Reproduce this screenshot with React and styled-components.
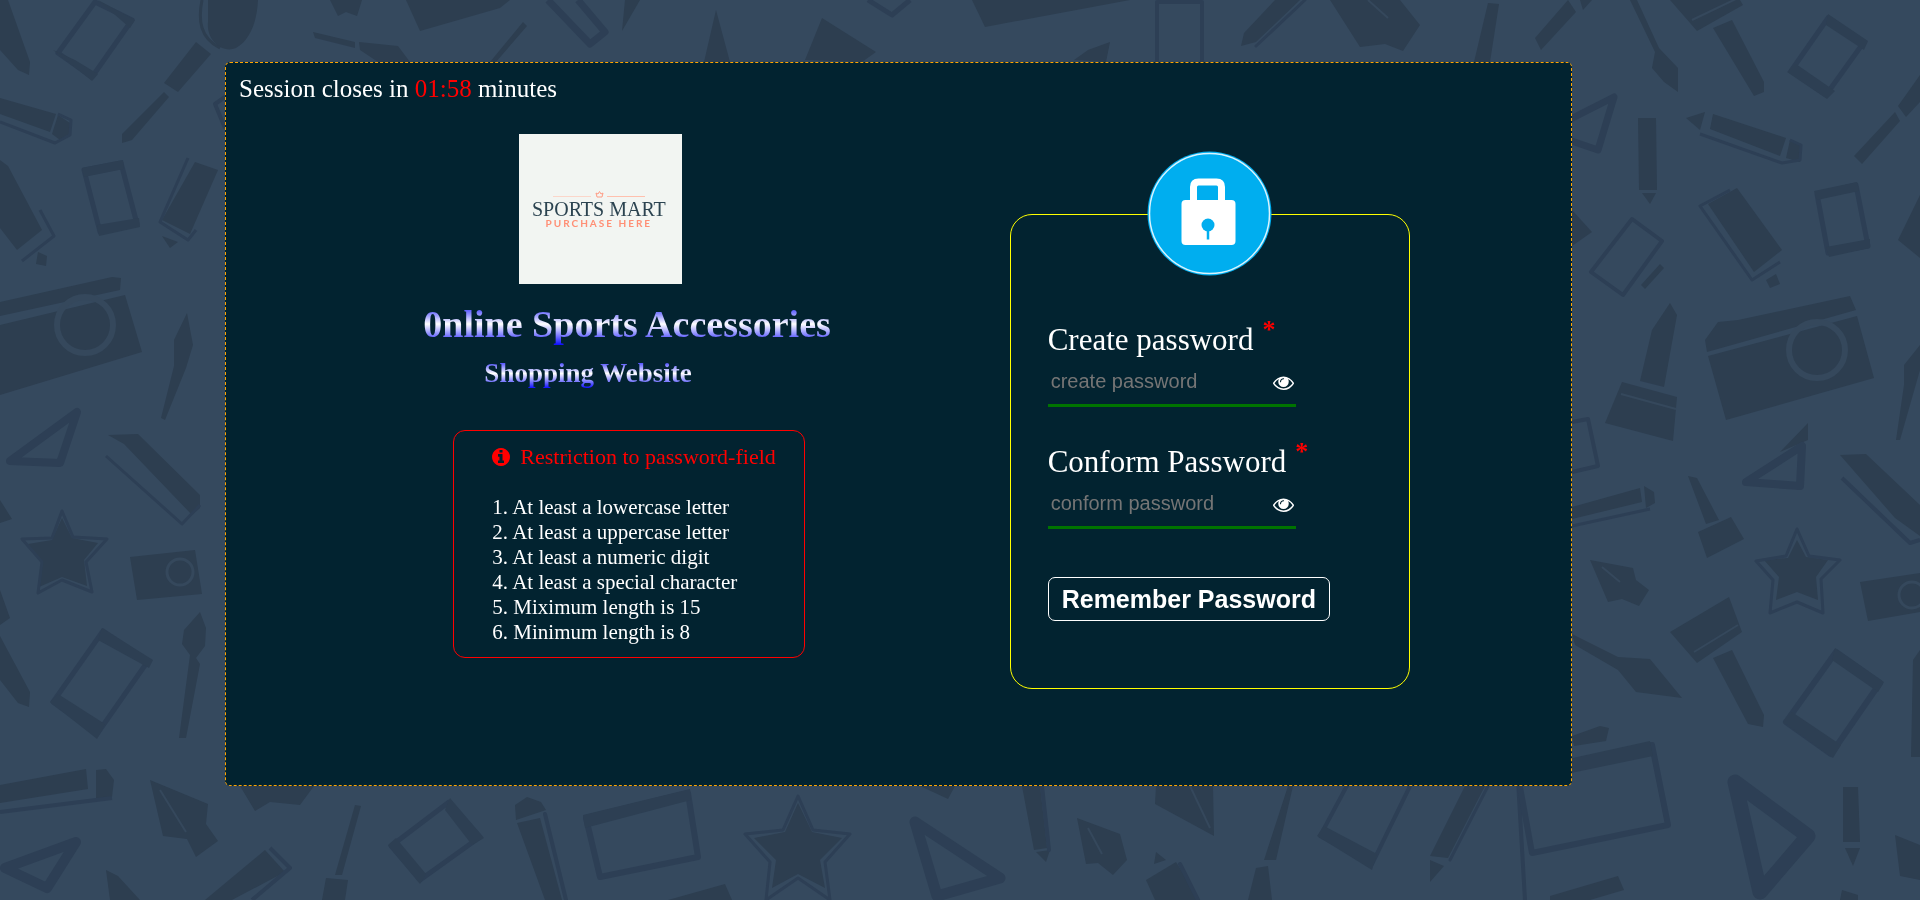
import React, { useState } from 'react';
import styled, { createGlobalStyle } from 'styled-components';

const GlobalStyle = createGlobalStyle`
  * { box-sizing: border-box; }
  body {
    margin: 0;
    background: #35495e;
    color: #fff;
    font-family: "Liberation Serif", "Times New Roman", serif;
  }
`;

const Page = styled.div`
  min-height: 100vh;
  padding: 62px 348px 62px 225px;
`;

const Backdrop = styled.svg`
  position: fixed;
  inset: 0;
  width: 100%;
  height: 100%;
  z-index: -1;
`;

const Panel = styled.main`
  min-height: 724px;
  padding-bottom: 96px;
  background: #022330;
  border: 1px dashed orange;
  border-radius: 5px;
`;

const Session = styled.p`
  margin: 0;
  padding: 11px 13px;
  font-size: 25px;
  line-height: 29px;
`;

const Clock = styled.span`
  color: red;
`;

const Columns = styled.div`
  display: grid;
  grid-template-columns: 197fr 406px 180fr 400px 161fr;
`;

const Brand = styled.section`
  grid-column: 2;
  padding-top: 20px;
`;

const Logo = styled.div`
  display: flex;
  flex-direction: column;
  align-items: center;
  width: 163px;
  height: 150px;
  margin-left: 96px;
  padding: 56px 4px 0 0;
  background: #f2f5f2;
  white-space: nowrap;
`;

const LogoName = styled.span`
  color: #2b4350;
  font-size: 20px;
  line-height: 22px;
`;

const LogoTagline = styled.span`
  color: #ff8f75;
  font: 700 10px/6px Lato, sans-serif;
  letter-spacing: 2px;
`;

const Title = styled.h1`
  width: max-content;
  margin: ${(p) => (p.$sub ? '12px 0 0 61px' : '18px 0 0')};
  font-size: ${(p) => (p.$sub ? 27 : 38)}px;
  line-height: ${(p) => (p.$sub ? 31 : 44)}px;
  font-weight: 700;
  color: transparent;
  background: linear-gradient(blue, white, blue);
  background-clip: text;
  -webkit-background-clip: text;
`;

const Rules = styled.section`
  width: 352px;
  height: 228px;
  margin: 41px 0 0 30px;
  padding: 13px 20px 13px 38px;
  border: 1px solid red;
  border-radius: 12px;
`;

const RulesTitle = styled.h2`
  display: flex;
  align-items: center;
  gap: 10px;
  margin: 0 0 25px;
  color: red;
  font-size: 22px;
  font-weight: 400;
  line-height: 26px;
  white-space: nowrap;
`;

const RulesList = styled.ol`
  margin: 0;
  padding: 0;
  list-style: none;
  font-size: 21px;
  line-height: 25px;
`;

const Card = styled.form`
  grid-column: 4;
  position: relative;
  height: 475px;
  margin-top: 100px;
  padding: 106px 37px 0;
  border: 1px solid #ffff00;
  border-radius: 22px;
`;

const Lock = styled.svg`
  position: absolute;
  top: -64px;
  left: 50%;
  margin-left: -63px;
  width: 125px;
  height: 125px;
`;

const Field = styled.div`
  height: 122px;
`;

const Label = styled.label`
  display: flex;
  gap: 9px;
  font-size: 31px;
  line-height: 37px;
  white-space: nowrap;
`;

const Required = styled.span`
  color: red;
  font-size: 26px;
  font-weight: 700;
  line-height: 18px;
`;

const InputRow = styled.div`
  display: flex;
  align-items: center;
  width: 248px;
  height: 49px;
  border-bottom: 3px solid #007400;
`;

const Input = styled.input`
  flex: 1;
  min-width: 0;
  height: 46px;
  padding: 0 3px;
  border: 0;
  outline: 0;
  background: transparent;
  color: #fff;
  font: 20px "Liberation Sans", Arial, sans-serif;
  &::placeholder { color: #757575; }
`;

const EyeButton = styled.button`
  display: flex;
  padding: 2px 2px 0;
  border: 0;
  background: none;
  color: #fff;
  cursor: pointer;
`;

const Submit = styled.button`
  height: 44px;
  margin-top: 12px;
  padding: 0 13px;
  border: 1px solid #fff;
  border-radius: 7px;
  background: transparent;
  color: #fff;
  font: 700 25px/28px "Liberation Sans", Arial, sans-serif;
  white-space: nowrap;
  cursor: pointer;
`;

const EYE =
  'M1664 960q-152-236-381-353 61 104 61 225 0 185-131.5 316.5t-316.5 131.5-316.5-131.5-131.5-316.5q0-121 61-225-229 117-381 353 133 205 333.5 326.5t434.5 121.5 434.5-121.5 333.5-326.5zm-720-384q0-20-14-34t-34-14q-125 0-214.5 89.5t-89.5 214.5q0 20 14 34t34 14 34-14 14-34q0-86 61-147t147-61q20 0 34-14t14-34zm848 384q0 34-20 69-140 230-376.5 368.5t-499.5 138.5-499.5-139-376.5-368q-20-35-20-69t20-69q140-229 376.5-368t499.5-139 499.5 139 376.5 368q20 35 20 69z';
const INFO =
  'M1152 1376v-160q0-14-9-23t-23-9h-96v-512q0-14-9-23t-23-9h-320q-14 0-23 9t-9 23v160q0 14 9 23t23 9h96v320h-96q-14 0-23 9t-9 23v160q0 14 9 23t23 9h448q14 0 23-9t9-23zm-128-896v-160q0-14-9-23t-23-9h-192q-14 0-23 9t-9 23v160q0 14 9 23t23 9h192q14 0 23-9t9-23zm640 416q0 209-103 385.5t-279.5 279.5-385.5 103-385.5-103-279.5-279.5-103-385.5 103-385.5 279.5-279.5 385.5-103 385.5 103 279.5 279.5 103 385.5z';

// Filled tools of the wallpaper: pens, brushes, nibs, sticks and camera bodies.
const SOLIDS = [
  '0,0 8,0 30,62 29,75 18,70 0,50',
  '196,42 211,54 178,92 164,83', '164,92 169,97 132,140 122,143 122,134',
  '0,98 56,114 50,132 0,114', '58,115 70,123 69,134 60,140 52,134', '0,160 8,166 42,230 17,250 0,228', '38,252 47,256 46,266 36,264',
  '195,162 218,170 190,234 162,220', '162,236 178,242 170,248',
  '0,302 112,277 121,278 120,290 0,316', '0,325 125,295 142,352 0,395',
  '187,313 193,345 186,368 165,420 161,418 174,366 174,340',
  '108,435 138,434 200,495 200,508 192,515 124,444',
  '62,518 72,538 98,543 84,560 87,586 62,577 39,587 43,562 28,544 52,540',
  '130,557 195,550 202,594 137,600',
  '200,612 206,628 205,646 196,658 200,664 186,738 179,738 190,655 182,644 184,630',
  '0,636 30,692 29,707 18,703 0,680', '0,500 12,519 0,523', '0,590 10,618 0,625',
  '0,785 86,769 88,789 0,803', '96,770 106,769 114,780 112,797 96,800',
  '150,780 208,804 206,824 218,841 196,857 187,839 163,836',
  '106,870 118,876 140,900 110,900', '240,786 314,786 300,805 270,802 255,811',
  '265,850 285,872 232,900 205,900', '355,805 361,806 342,875 335,875', '326,878 348,880 345,900 322,900',
  '515,805 527,797 541,802 546,810 516,820', '517,823 540,818 562,900 545,900',
  '330,0 362,0 357,16 346,12 338,16', '406,0 510,0 500,8 420,31', '625,0 640,0 622,31',
  '523,22 527,26 496,62 490,62', '313,32 355,42 355,48 315,38', '359,42 398,46 410,62 378,62 360,50',
  '716,10 730,62 704,62', '822,18 876,52 862,62 805,60', '972,0 1130,0 985,27',
  '1275,0 1300,0 1256,42 1241,46 1244,33', '1330,0 1400,0 1420,25 1403,51 1385,44 1360,47',
  '1488,3 1499,4 1490,62 1474,62', '1110,42 1106,62 1074,60 1088,50',
  '798,803 812,832 842,838 820,860 825,888 798,874 772,888 776,860 754,838 785,832',
  '1022,786 1040,786 1047,848 1034,850', '1036,852 1050,850 1046,862',
  '1077,818 1120,834 1127,860 1113,875 1098,863 1086,864',
  '1156,786 1213,786 1214,836 1155,804', '1146,880 1176,862 1200,900 1155,900', '1156,852 1166,860 1154,864',
  '1288,786 1293,786 1276,860 1264,860', '1256,868 1268,866 1272,900 1248,900',
  '1465,786 1485,786 1448,858 1430,856', '1430,860 1444,866 1430,882',
  '920,786 955,786 948,799', '668,900 725,884 732,900', '1568,0 1576,12 1541,50 1535,38',
  '1580,0 1592,0 1583,10', '1630,0 1637,0 1659,48 1678,68 1678,92 1664,82 1652,68 1655,52',
  '1670,0 1740,0 1743,5 1697,31', '1713,28 1732,20 1764,82 1764,92 1754,96',
  '1898,106 1920,75 1920,102 1906,117', '1895,112 1900,121 1862,164 1854,156',
  '1638,118 1656,118 1657,190 1639,190', '1642,193 1656,193 1650,204',
  '1686,118 1705,112 1700,130', '1713,114 1786,138 1780,156 1710,129', '1790,140 1802,146 1800,162 1786,158',
  '1708,204 1737,188 1782,250 1754,272', '1766,280 1776,274 1780,284 1770,288',
  '1898,240 1920,195 1920,258', '1572,210 1592,232 1572,246', '1660,264 1664,268 1645,289 1641,285',
  '1670,303 1677,315 1664,387 1640,381 1652,330', '1622,382 1677,397 1673,441 1605,423',
  '1705,340 1718,322 1738,320 1850,296 1856,310 1707,352', '1708,356 1857,316 1874,378 1726,420',
  '1920,345 1904,365 1904,385 1896,440 1900,440 1920,370', '1808,423 1808,440 1780,452',
  '1572,507 1640,488 1642,502 1572,519', '1644,486 1654,492 1655,503 1646,508',
  '1688,476 1697,478 1719,520 1706,524', '1698,532 1731,517 1744,539 1707,558',
  '1840,455 1866,454 1920,505 1920,536 1895,518', '1590,560 1633,568 1636,580 1649,590 1639,606 1622,599 1608,602',
  '1797,540 1806,557 1828,560 1816,577 1818,600 1797,592 1776,600 1779,577 1764,560 1788,558',
  '1860,582 1920,573 1920,612 1868,621',
  '1670,632 1729,597 1742,632 1697,663', '1713,658 1732,650 1764,715 1763,727 1748,724',
  '1572,634 1618,657 1650,659 1682,698 1636,692 1618,670 1575,645',
  '1572,736 1600,726 1609,728 1606,741 1574,746', '1843,787 1858,787 1860,842 1843,842',
  '1845,848 1860,848 1853,866', '1895,835 1920,845 1920,880 1900,876',
  '1550,896 1618,876 1624,890 1590,900 1550,900', '1842,890 1858,895 1858,900 1840,900',
  '1913,660 1920,650 1920,757 1911,757',
];

// Outlined tools: phones, tablets, clipboards and set squares, as [stroke width, points].
const OUTLINES = [
  [5, '95,2 132,20 92,77 58,53'], [5, '84,170 121,163 137,224 100,232'], [4, '225,97 215,104 225,128'],
  [3, '0,122 55,143 70,135 71,120 58,114'], [3, '22,261 54,236 40,210'],
  [3, '188,158 160,222 188,240 196,230'], [8, '77,412 60,463 10,461'],
  [3, '106,456 182,524 200,505'], [3, '62,511 73,537 107,539 86,562 92,592 62,580 38,593 42,562 22,539 52,538'],
  [5, '103,631 148,661 97,734 53,702'], [4, '0,812 112,798'], [10, '76,842 47,888 5,868'],
  [4, '270,848 290,868 252,900'], [5, '449,802 480,837 420,880 391,846'], [4, '545,814 566,900'],
  [6, '586,818 688,793 698,857 600,877'], [3, '798,796 813,830 850,834 825,862 830,900 798,878 766,900 770,862 745,834 783,830'],
  [11, '915,822 1000,878 937,896'], [4, '1042,786 1049,850'], [4, '1180,864 1198,900'],
  [4, '1350,780 1320,836 1372,864 1412,782'], [3, '1488,786 1450,860'], [5, '868,0 892,15 910,0'],
  [4, '1157,2 1202,2 1202,64 1157,64'], [7, '548,0 590,44 605,32 578,0'], [3, '1305,0 1256,46'],
  [4, '1518,780 1525,900'], [5, '1828,18 1864,42 1826,95 1791,71'], [7, '1614,97 1598,150 1545,132'],
  [3, '1700,134 1782,163 1800,160 1801,145 1790,140'], [3, '1730,190 1700,206 1752,280 1780,262'],
  [5, '1817,194 1856,185 1868,246 1828,253'], [4, '1632,219 1662,241 1623,295 1591,272'],
  [4, '1572,422 1588,419 1598,466 1572,472'], [3, '1572,526 1650,509'], [8, '1802,446 1800,486 1746,482'],
  [3, '1797,529 1809,556 1840,560 1821,579 1823,613 1797,602 1770,613 1773,580 1756,561 1786,556'],
  [4, '1842,478 1910,543 1920,540'], [6, '1836,652 1880,683 1831,754 1786,722'],
  [6, '1518,776 1652,745 1668,825 1532,853'], [15, '1735,782 1808,836 1760,892'],
];

// Outlines whose last point does not join the first.
const OPEN = /^(225|0,|22,|106|188|270|1350|868|1572|1700|1730|1842|548)/;

// Thick bezels of the phones and clipboards.
const BEZELS = [
  '53,50 75,60 98,74 92,81', '98,0 135,20 130,28', '97,225 139,218 140,227 99,236', '82,168 123,160 124,169 84,177',
  '102,628 153,660 149,668 98,640', '50,702 58,694 105,724 97,739', '450,798 484,838 472,845 445,810',
  '388,845 396,838 426,874 420,884', '583,815 690,789 691,800 585,828', '1317,836 1324,826 1377,854 1372,870',
  '1828,14 1868,41 1864,50 1826,25', '1787,72 1796,64 1835,91 1827,99', '1814,191 1857,182 1859,191 1817,200',
  '1826,247 1870,239 1870,248 1829,257', '1835,648 1884,682 1878,692 1832,660', '1783,722 1792,712 1841,745 1833,758',
  '1518,770 1650,741 1653,756 1518,784',
];

// Rings drawn on top of the camera bodies.
const LENSES = [[85, 325, 28], [180, 572, 13], [1817, 350, 28], [1912, 595, 13]];

function Wallpaper() {
  return (
    <Backdrop viewBox="0 0 1920 900" preserveAspectRatio="xMidYMid slice" aria-hidden="true">
      <rect width="1920" height="900" fill="#35495e" />
      <g fill="#2d3e50">
        {SOLIDS.map((points) => <polygon key={points} points={points} />)}
        <path d="M208 0h50c-1 22-8 40-22 48-14 6-30-8-28-26z" />
        <path d="M202 0c-4 20-2 38 18 48" fill="none" stroke="#2d3e50" strokeWidth="3" />
      </g>
      <g fill="none" stroke="#2d3f55" strokeLinejoin="round">
        {OUTLINES.map(([width, points]) => (
          OPEN.test(points)
            ? <polyline key={points} points={points} strokeWidth={width} />
            : <polygon key={points} points={points} strokeWidth={width} />
        ))}
      </g>
      <g fill="#2d3f53">
        {BEZELS.map((points) => <polygon key={points} points={points} />)}
      </g>
      <g fill="none" stroke="#35485c">
        {LENSES.map(([x, y, r]) => <circle key={x} cx={x} cy={y} r={r} strokeWidth={r > 20 ? 6 : 3} />)}
        <path d="M1621 394l55 15M1692 20l46-22M1694 652l44-27M160 790l26 42M1088 828l14 26M1602 567l18 15M1368 0l20 18M1190 786l20 42" strokeWidth="2" />
      </g>
    </Backdrop>
  );
}

const Icon = styled.svg`
  flex: none;
  width: ${(p) => p.$size}px;
  height: ${(p) => p.$size}px;
  fill: currentColor;
`;

function Glyph({ path, size, box = '0 0 1792 1792' }) {
  return (
    <Icon $size={size} viewBox={box} aria-hidden="true">
      <path d={path} />
    </Icon>
  );
}

function PasswordField({ id, label, placeholder }) {
  const [visible, setVisible] = useState(false);
  return (
    <Field>
      <Label htmlFor={id}>{label}<Required>*</Required></Label>
      <InputRow>
        <Input id={id} type={visible ? 'text' : 'password'} placeholder={placeholder} />
        <EyeButton type="button" aria-label="Show password" onClick={() => setVisible(!visible)}>
          <Glyph path={EYE} size={21} />
        </EyeButton>
      </InputRow>
    </Field>
  );
}

const RULES = [
  'At least a lowercase letter',
  'At least a uppercase letter',
  'At least a numeric digit',
  'At least a special character',
  'Miximum length is 15',
  'Minimum length is 8',
];

export default function App() {
  return (
    <>
      <GlobalStyle />
      <Wallpaper />
      <Page>
        <Panel>
          <Session>Session closes in <Clock>01:58</Clock> minutes</Session>
          <Columns>
            <Brand>
              <Logo>
                <svg width="92" height="8" viewBox="0 0 92 8" fill="none" aria-hidden="true">
                  <path d="M0 6.500h38" stroke="#fbd6ca" />
                  <path d="M54 6.500h38" stroke="#ffc0ae" />
                  <path d="M43 3l1 4h5l1-4-2 1-1.500-2.500L45 4z" stroke="#ff9c85" />
                </svg>
                <LogoName>SPORTS MART</LogoName>
                <LogoTagline>PURCHASE HERE</LogoTagline>
              </Logo>
              <Title>0nline Sports Accessories</Title>
              <Title as="h2" $sub>Shopping Website</Title>
              <Rules>
                <RulesTitle>
                  <Glyph path={INFO} size={18} box="128 128 1536 1536" />
                  Restriction to password-field
                </RulesTitle>
                <RulesList>
                  {RULES.map((rule, i) => <li key={rule}>{i + 1}. {rule}</li>)}
                </RulesList>
              </Rules>
            </Brand>
            <Card onSubmit={(e) => e.preventDefault()}>
              <Lock viewBox="0 0 125 125" aria-hidden="true">
                <circle cx="62.500" cy="62.500" r="62" fill="#00aeef" />
                <circle cx="62.500" cy="62.500" r="60" fill="none" stroke="#d9f3fd" strokeWidth="1.500" />
                <path d="M46.500 52V36q0-5 5-5h18q5 0 5 5v16" fill="none" stroke="#fff" strokeWidth="7" />
                <rect x="34.500" y="49" width="54" height="45" rx="4" fill="#fff" />
                <circle cx="61" cy="74" r="6.500" fill="#00aeef" />
                <path d="M61 78v10.500" stroke="#00aeef" strokeWidth="2.500" />
              </Lock>
              <PasswordField id="create" label="Create password" placeholder="create password" />
              <PasswordField id="conform" label="Conform Password" placeholder="conform password" />
              <Submit type="submit">Remember Password</Submit>
            </Card>
          </Columns>
        </Panel>
      </Page>
    </>
  );
}
